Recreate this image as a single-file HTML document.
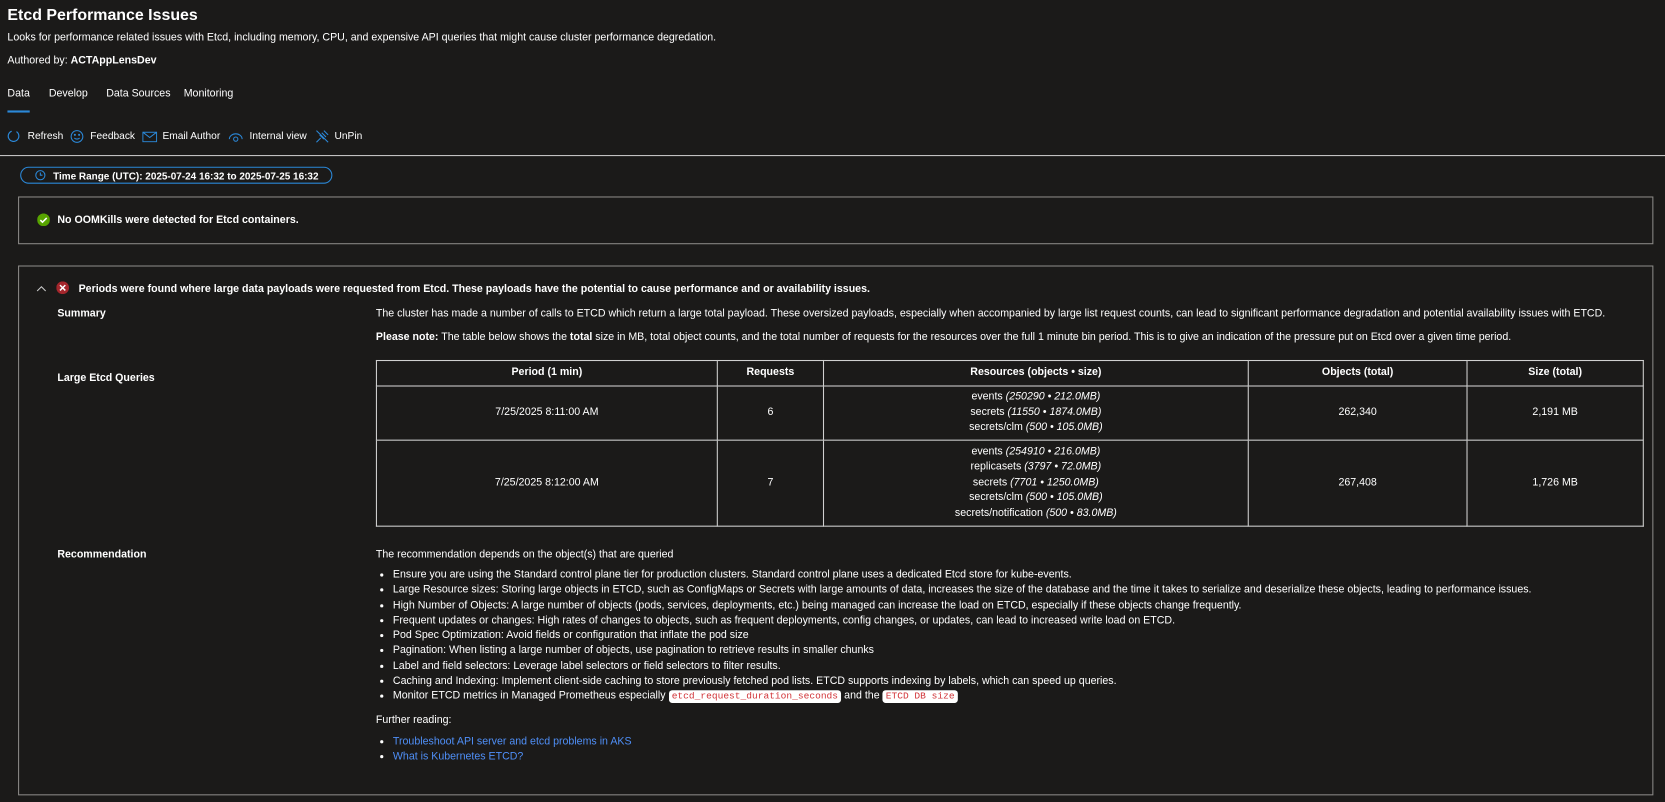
<!DOCTYPE html>
<html><head><meta charset="utf-8"><style>
*{margin:0;padding:0;box-sizing:border-box}
body{width:1665px;height:801px;background:#1b1a19;color:#fff;font-family:"Liberation Sans",sans-serif;font-size:10px;position:relative;overflow:hidden}
#w{position:absolute;left:0;top:0;width:1568px;height:755px;transform:scale(1.0619);transform-origin:0 0}
.a{position:absolute;white-space:nowrap}
.b{font-weight:bold}
table{border-collapse:collapse;position:absolute;left:354px;top:339px;width:1194px;font-size:10px}
td,th{border:1px solid #d0d0d0;text-align:center;vertical-align:middle;line-height:14.5px}
th{height:24px;font-weight:bold}
i{font-style:italic}
ul{list-style:disc;position:absolute;left:370px;margin:0;padding-left:0}
li{line-height:14.3px;white-space:nowrap}
code{font-family:"Liberation Mono",monospace;font-size:9px;color:#d13438;background:#fff;border-radius:3px;padding:1px 3px}
a{color:#4f8ff7;text-decoration:none}
</style></head><body><div id="w">
<div class="a b" style="left:7px;top:6px;font-size:15px">Etcd Performance Issues</div>
<div class="a" style="left:7px;top:30px">Looks for performance related issues with Etcd, including memory, CPU, and expensive API queries that might cause cluster performance degredation.</div>
<div class="a" style="left:7px;top:52px">Authored by: <b>ACTAppLensDev</b></div>
<div class="a" style="left:7px;top:83px">Data</div>
<div class="a" style="left:7px;top:104px;width:21px;height:2px;background:#2b88d8"></div>
<div class="a" style="left:46px;top:83px">Develop</div>
<div class="a" style="left:100px;top:83px">Data Sources</div>
<div class="a" style="left:173px;top:83px">Monitoring</div>
<svg class="a" style="left:7px;top:122px" width="12" height="13" viewBox="0 0 12 13" fill="none" stroke="#2b88d8" stroke-width="1.1"><path d="M4 1.5A5 5 0 1 0 8.5 2"/></svg>
<div class="a" style="left:26px;top:123px;font-size:9.6px">Refresh</div>
<svg class="a" style="left:66px;top:122px" width="13" height="13" fill="none" stroke="#2b88d8" stroke-width="1"><circle cx="6.5" cy="6.5" r="5.5"/><path d="M4 8q2.5 2 5 0"/><circle cx="4.5" cy="5" r=".5"/><circle cx="8.5" cy="5" r=".5"/></svg>
<div class="a" style="left:85px;top:123px;font-size:9.6px">Feedback</div>
<svg class="a" style="left:134px;top:124px" width="14" height="10" fill="none" stroke="#2b88d8" stroke-width="1"><rect x=".5" y=".5" width="13" height="9"/><path d="M.5 .5l6.5 5 6.5-5"/></svg>
<div class="a" style="left:153px;top:123px;font-size:9.6px">Email Author</div>
<svg class="a" style="left:215px;top:124px" width="14" height="10" fill="none" stroke="#2b88d8" stroke-width="1"><path d="M1 7a6 5 0 0 1 12 0"/><circle cx="7" cy="7" r="2"/></svg>
<div class="a" style="left:235px;top:123px;font-size:9.6px">Internal view</div>
<svg class="a" style="left:297px;top:122px" width="13" height="13" fill="none" stroke="#2b88d8" stroke-width="1"><path d="M1 12l4-4M4 5l4 4M6 3l4 4M8 1l4 4M1 1l11 11"/></svg>
<div class="a" style="left:315px;top:123px;font-size:9.6px">UnPin</div>
<div class="a" style="left:0;top:146px;width:1568px;height:1px;background:#c8c8c8"></div>
<div class="a" style="left:19px;top:157px;width:294px;height:16px;border:1px solid #2b88d8;border-radius:8px"></div>
<svg class="a" style="left:33px;top:160px" width="10" height="10" fill="none" stroke="#2b88d8" stroke-width="1"><circle cx="5" cy="5" r="4.3"/><path d="M5 2.5V5h2"/></svg>
<div class="a b" style="left:50px;top:160px;font-size:9.4px">Time Range (UTC): 2025-07-24 16:32 to 2025-07-25 16:32</div>
<div class="a" style="left:17px;top:185px;width:1540px;height:45px;border:1px solid #8a8886"></div>
<svg class="a" style="left:35px;top:201px" width="12" height="12"><circle cx="6" cy="6" r="6" fill="#57a300"/><path d="M3 6.2l2 2 4-4" stroke="#fff" stroke-width="1.5" fill="none"/></svg>
<div class="a b" style="left:54px;top:202px">No OOMKills were detected for Etcd containers.</div>
<div class="a" style="left:17px;top:250px;width:1540px;height:499px;border:1px solid #8a8886"></div>
<svg class="a" style="left:34px;top:268px" width="10" height="8" fill="none" stroke="#c8c8c8" stroke-width="1"><path d="M1 6l4-4 4 4"/></svg>
<svg class="a" style="left:53px;top:265px" width="12" height="12"><circle cx="6" cy="6" r="6" fill="#a4262c"/><path d="M3.5 3.5l5 5M8.5 3.5l-5 5" stroke="#fff" stroke-width="1.4"/></svg>
<div class="a b" style="left:74px;top:267px">Periods were found where large data payloads were requested from Etcd. These payloads have the potential to cause performance and or availability issues.</div>
<div class="a b" style="left:54px;top:290px">Summary</div>
<div class="a" style="left:354px;top:290px">The cluster has made a number of calls to ETCD which return a large total payload. These oversized payloads, especially when accompanied by large list request counts, can lead to significant performance degradation and potential availability issues with ETCD.</div>
<div class="a" style="left:354px;top:312px"><b>Please note:</b> The table below shows the <b>total</b> size in MB, total object counts, and the total number of requests for the resources over the full 1 minute bin period. This is to give an indication of the pressure put on Etcd over a given time period.</div>
<div class="a b" style="left:54px;top:351px">Large Etcd Queries</div>
<table>
<tr><th style="width:321px">Period (1 min)</th><th style="width:100px">Requests</th><th style="width:400px">Resources (objects • size)</th><th style="width:206px">Objects (total)</th><th>Size (total)</th></tr>
<tr style="height:51px"><td>7/25/2025 8:11:00 AM</td><td>6</td><td>events <i>(250290 • 212.0MB)</i><br>secrets <i>(11550 • 1874.0MB)</i><br>secrets/clm <i>(500 • 105.0MB)</i></td><td>262,340</td><td>2,191 MB</td></tr>
<tr style="height:81px"><td>7/25/2025 8:12:00 AM</td><td>7</td><td>events <i>(254910 • 216.0MB)</i><br>replicasets <i>(3797 • 72.0MB)</i><br>secrets <i>(7701 • 1250.0MB)</i><br>secrets/clm <i>(500 • 105.0MB)</i><br>secrets/notification <i>(500 • 83.0MB)</i></td><td>267,408</td><td>1,726 MB</td></tr>
</table>
<div class="a b" style="left:54px;top:517px">Recommendation</div>
<div class="a" style="left:354px;top:517px">The recommendation depends on the object(s) that are queried</div>
<ul style="top:535px">
<li>Ensure you are using the Standard control plane tier for production clusters. Standard control plane uses a dedicated Etcd store for kube-events.</li>
<li>Large Resource sizes: Storing large objects in ETCD, such as ConfigMaps or Secrets with large amounts of data, increases the size of the database and the time it takes to serialize and deserialize these objects, leading to performance issues.</li>
<li>High Number of Objects: A large number of objects (pods, services, deployments, etc.) being managed can increase the load on ETCD, especially if these objects change frequently.</li>
<li>Frequent updates or changes: High rates of changes to objects, such as frequent deployments, config changes, or updates, can lead to increased write load on ETCD.</li>
<li>Pod Spec Optimization: Avoid fields or configuration that inflate the pod size</li>
<li>Pagination: When listing a large number of objects, use pagination to retrieve results in smaller chunks</li>
<li>Label and field selectors: Leverage label selectors or field selectors to filter results.</li>
<li>Caching and Indexing: Implement client-side caching to store previously fetched pod lists. ETCD supports indexing by labels, which can speed up queries.</li>
<li>Monitor ETCD metrics in Managed Prometheus especially <code>etcd_request_duration_seconds</code> and the <code>ETCD DB size</code></li>
</ul>
<div class="a" style="left:354px;top:673px">Further reading:</div>
<ul style="top:692px">
<li><a>Troubleshoot API server and etcd problems in AKS</a></li>
<li><a>What is Kubernetes ETCD?</a></li>
</ul>
</div></body></html>
